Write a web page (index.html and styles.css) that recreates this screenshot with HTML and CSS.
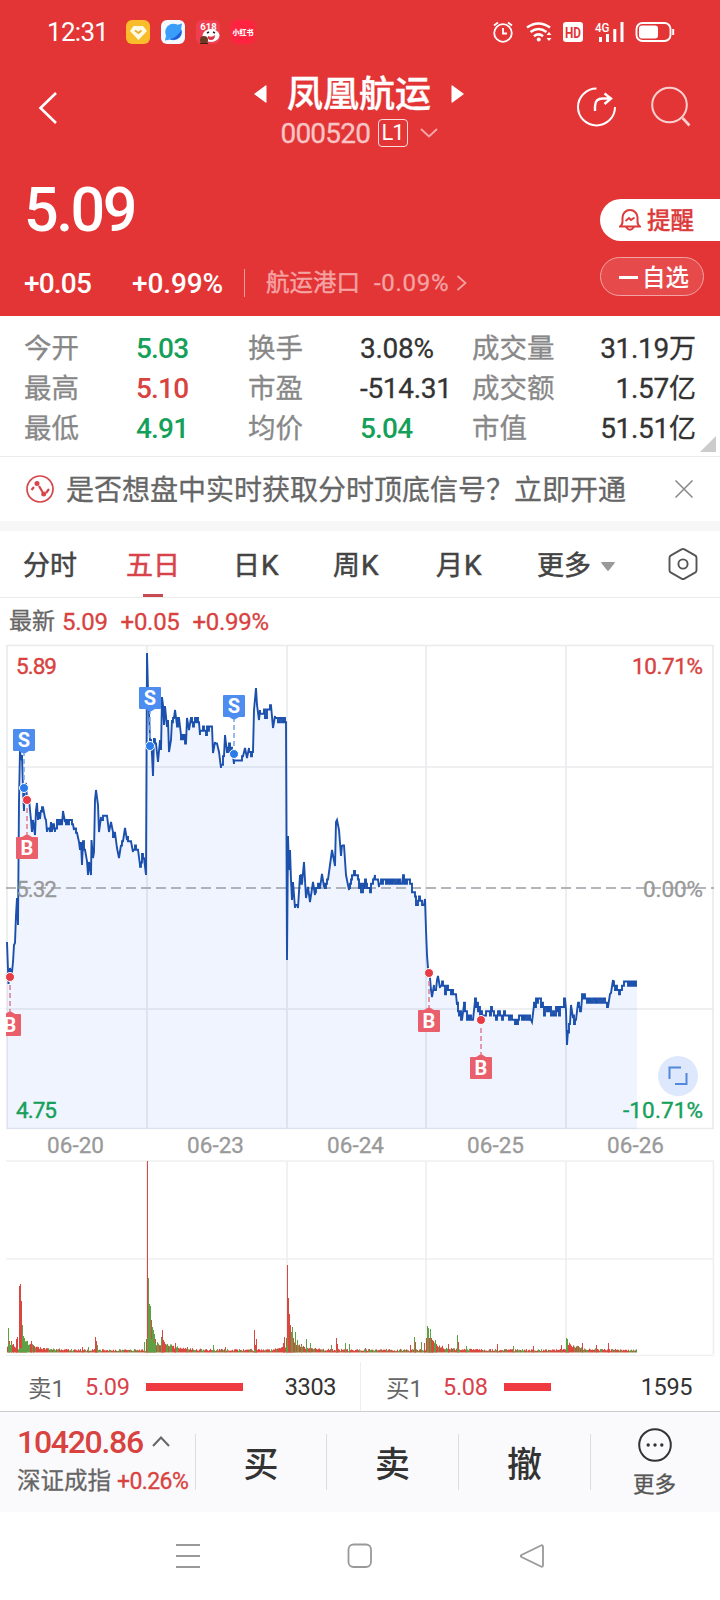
FILE: index.html
```html
<!DOCTYPE html>
<html lang="zh-CN">
<head>
<meta charset="utf-8">
<title>凤凰航运 000520</title>
<link rel="stylesheet" href="styles.css">
</head>
<body>
<main class="app">
  <header class="hero">
    <div class="status">
      <span class="clock">12:31</span>
      <div class="notif">
        <svg width="24" height="24" viewBox="0 0 24 24"><rect width="24" height="24" rx="6" fill="#f9bd2c"/><path d="M7.500 6h9.500L21 11l-8.500 9L4 11z" fill="#fffbe6"/><path d="M9 10.500l3.500 2.500 3-2.500" fill="none" stroke="#e8b035" stroke-width="2"/></svg>
        <svg width="24" height="24" viewBox="0 0 24 24"><rect width="24" height="24" rx="6" fill="#f4f8ff"/><circle cx="12.500" cy="12" r="8.300" fill="#3a9dfa"/><path d="M20.500 10c1.500 8-6 11-12 9.500C14 18 18 14 20.500 10z" fill="#1f5fdc"/><path d="M21 3.500l-5 1.500 4 4zM4 20.500l1-5 4 4z" fill="#3a9dfa"/></svg>
        <svg width="24" height="24" viewBox="0 0 24 24"><rect width="24" height="24" rx="6" fill="#ee3e50"/><ellipse cx="15" cy="15.500" rx="8.500" ry="6.500" fill="#fff"/><path d="M12 16q4 2 7-1 0 5-4 5t-3-4z" fill="#d7394a"/><path d="M11 13l2-1M17 12l2 1" stroke="#222" stroke-width="1.500"/><circle cx="8" cy="20" r="4" fill="#6b3a22"/><path d="M4 23.500h8" stroke="#3c1f14"/><text x="12.500" y="10" text-anchor="middle" class="t618">618</text></svg>
        <svg width="24" height="24" viewBox="0 0 24 24"><rect width="24" height="24" rx="6" fill="#fe2440"/><text x="12" y="15" text-anchor="middle" class="txhs">小红书</text></svg>
      </div>
      <svg class="sys" width="184" height="24" viewBox="0 0 184 24" fill="none" stroke="#fff" stroke-width="1.800">
        <circle cx="11" cy="13" r="8.800"/><path d="M11 8v5.500h4M2 5.500l4-3M20 5.500l-4-3"/>
        <g stroke-width="2.600"><path d="M35 7.500q11.500-8 23 0M38.500 12q8-6 16 0M42 16.200q4.500-3.500 9 0"/></g><circle cx="46.700" cy="19.500" r="2" fill="#fff" stroke="none"/><path d="M54.500 15l2.500-3 2.500 3zM54.500 18l2.500 3 2.500-3z" fill="#fff" stroke="none"/>
        <rect x="71" y="2" width="20" height="20" rx="3" fill="#fff" stroke="none"/><text x="81" y="17.500" text-anchor="middle" class="thd" textLength="16" lengthAdjust="spacingAndGlyphs">HD</text>
        <text x="103" y="11.500" class="t4g" textLength="14.500" lengthAdjust="spacingAndGlyphs">4G</text>
        <path d="M108.500 17v5M115.500 14v8M122.800 9v13M130 2v20" stroke-width="3"/>
        <rect x="144.500" y="3" width="34" height="18" rx="6" stroke-width="1.900"/><rect x="147" y="5.500" width="19" height="13" rx="3" fill="#fff" stroke="none"/><path d="M181.200 9v6" stroke-width="2"/>
      </svg>
    </div>

    <div class="titlebar">
      <svg class="back" width="20" height="34" viewBox="0 0 20 34"><path d="M18 2L2.500 17 18 32" fill="none" stroke="#fff" stroke-width="2.600"/></svg>
      <div class="names">
        <div class="name">
          <svg width="13" height="18" viewBox="0 0 13 18"><path d="M12.500 1v16q0 1-1 .5L0 9 11.500.5q1-.5 1 .5z" fill="#fff"/></svg>
          <h1>凤凰航运</h1>
          <svg width="13" height="18" viewBox="0 0 13 18"><path d="M.5 1v16q0 1 1 .5L13 9 1.500.5Q.5 0 .5 1z" fill="#fff"/></svg>
        </div>
        <div class="code">
          <span>000520</span><b>L1</b>
          <svg width="18" height="10" viewBox="0 0 18 10"><path d="M1 1l8 7.500L17 1" fill="none" stroke="#f3a9a9" stroke-width="1.800"/></svg>
        </div>
      </div>
      <div class="tools">
        <svg width="42" height="42" viewBox="0 0 42 42" fill="none" stroke="#fff" stroke-width="2"><path d="M21.500 2.500a18.500 18.500 0 1 0 18.500 18.500" /><path d="M20 25v-4.500q0-8 8-8H36M29.500 7.500l6.500 5-6.500 5.500" stroke-width="2.400"/></svg>
        <svg width="42" height="42" viewBox="0 0 42 42" fill="none" stroke="#f9d0d0" stroke-width="2"><circle cx="19.500" cy="19" r="17.300"/><path d="M32.500 32l7 7.500" stroke-width="2.600"/></svg>
      </div>
    </div>

    <div class="quote">
      <div class="figures">
        <div class="price">5.09</div>
        <div class="change">
          <span class="chg">+0.05</span><span class="pct">+0.99%</span>
          <i></i>
          <span class="sector">航运港口</span><span class="secpct">-0.09%</span>
          <svg width="11" height="16" viewBox="0 0 11 16"><path d="M1.500 1l8 7-8 7" fill="none" stroke="#f5a3a3" stroke-width="1.700"/></svg>
        </div>
      </div>
      <div class="pills">
        <div class="alert">
          <svg width="22" height="24" viewBox="0 0 22 24" fill="none" stroke="#dc3b3c" stroke-width="2"><path d="M1 18.500q2.500-1.500 2.500-5V9.500a7.500 7.500 0 0 1 15 0v4q0 3.500 2.500 5zM7 19q4 5.500 8 0"/><path d="M6.500 13l3.500-3 2 2 3.500-2.500" stroke-width="1.800"/></svg>
          提醒
        </div>
        <div class="fav"><i></i>自选</div>
      </div>
    </div>
  </header>

  <section class="stats">
    <span>今开</span><b class="up-g">5.03</b><span>换手</span><b>3.08%</b><span>成交量</span><b class="end">31.19<em>万</em></b>
    <span>最高</span><b class="up-r">5.10</b><span>市盈</span><b>-514.31</b><span>成交额</span><b class="end">1.57<em>亿</em></b>
    <span>最低</span><b class="up-g">4.91</b><span>均价</span><b class="up-g">5.04</b><span>市值</span><b class="end">51.51<em>亿</em></b>
    <svg class="corner" width="16" height="16" viewBox="0 0 16 16"><path d="M16 0v16H0z" fill="#ccc"/></svg>
  </section>

  <section class="tip">
    <svg width="28" height="28" viewBox="0 0 28 28" fill="none" stroke="#d5454a" stroke-width="1.700"><circle cx="14" cy="14" r="13"/><path d="M5.500 15l2.500-3M13 11l3.500 6M20 18l3-4" stroke-width="2.200"/><circle cx="11" cy="8.500" r="2.500" fill="#d5454a" stroke="none"/><circle cx="17.700" cy="19" r="2.500" fill="#d5454a" stroke="none"/></svg>
    <p>是否想盘中实时获取分时顶底信号？立即开通</p>
    <svg class="close" width="18" height="18" viewBox="0 0 18 18"><path d="M.5.5l17 17M17.500.5l-17 17" stroke="#888" stroke-width="1.500"/></svg>
  </section>

  <nav class="tabs">
    <span>分时</span><span class="on">五日</span><span>日<u>K</u></span><span>周<u>K</u></span><span>月<u>K</u></span>
    <span class="more">更多<svg width="14" height="9" viewBox="0 0 14 9"><path d="M1 0h12q1.500 0 .5 1.300L8 8.300q-1 1-2 0L.500 1.300Q-.5 0 1 0z" fill="#999"/></svg></span>
    <svg class="gear" width="30" height="34" viewBox="0 0 30 34" fill="none" stroke="#555" stroke-width="1.900"><path d="M13.500 2.400q1.500-.8 3 0l10.500 5.900q1.500.8 1.500 2.500v12.400q0 1.700-1.500 2.500l-10.500 5.900q-1.500.8-3 0L3 25.700q-1.500-.8-1.500-2.500V10.800Q1.500 9.100 3 8.300z"/><circle cx="15" cy="17" r="4.600"/></svg>
  </nav>

  <div class="latest"><span>最新</span><b>5.09</b><b>+0.05</b><b>+0.99%</b></div>

  <svg class="chart" width="720" height="712" viewBox="0 644 720 712">
    <g class="grid">
      <path d="M7 645v484M713 645v484M147 645v484M287 645v484M426 645v484M566 645v484M6 767h708M6 1009h708"/>
      <path d="M6 645.500h708M6 1128.500h708" stroke-width="2.500"/>
    </g>
    <path id="area" class="area"/>
    <path d="M6 888h708" class="mid"/>
    <path id="line" class="line"/>
    <g class="axis">
      <text x="16" y="674" class="r" textLength="41">5.89</text>
      <text x="632" y="674" class="r" textLength="71">10.71%</text>
      <text x="16" y="897" class="n" textLength="41">5.32</text>
      <text x="643" y="897" class="n" textLength="60">0.00%</text>
      <text x="16" y="1118" class="g" textLength="41">4.75</text>
      <text x="623" y="1118" class="g" textLength="80">-10.71%</text>
    </g>
    <g id="marks"></g>
    <circle cx="678" cy="1076" r="20" fill="#dee8fd"/>
    <path d="M669.500 1079v-11.500h11.500M686.500 1073v11h-11.500" fill="none" stroke="#5288dc" stroke-width="2"/>
    <g class="dates">
      <text x="47" y="1153" textLength="57">06-20</text><text x="187" y="1153" textLength="57">06-23</text><text x="327" y="1153" textLength="57">06-24</text><text x="467" y="1153" textLength="57">06-25</text><text x="607" y="1153" textLength="57">06-26</text>
    </g>
    <path class="grid vol" d="M6 1161h708M6 1259h708M6 1355.500h708M713.500 1161v193M147 1161v193M287 1161v193M426 1161v193M566 1161v193"/>
    <path id="volr" stroke="#d8483f"/>
    <path id="volg" stroke="#5fa044"/>
  </svg>

  <section class="book">
    <div><span>卖1</span><b>5.09</b><i style="width:97px"></i><strong>3303</strong></div>
    <div><span>买1</span><b>5.08</b><i style="width:47px"></i><strong>1595</strong></div>
  </section>

  <footer class="actions">
    <div class="index">
      <div class="idx">10420.86<svg width="18" height="11" viewBox="0 0 18 11"><path d="M1 10l8-8.500L17 10" fill="none" stroke="#666" stroke-width="2"/></svg></div>
      <div class="idn">深证成指<b>+0.26%</b></div>
    </div>
    <div class="act">买</div><div class="act">卖</div><div class="act">撤</div>
    <div class="dots">
      <svg width="36" height="36" viewBox="0 0 36 36"><circle cx="18" cy="18" r="15.800" fill="none" stroke="#333" stroke-width="2"/><g fill="#333"><circle cx="11.200" cy="18" r="1.700"/><circle cx="18" cy="18" r="1.700"/><circle cx="24.800" cy="18" r="1.700"/></g></svg>
      更多
    </div>
  </footer>

  <div class="sysnav">
    <svg width="26" height="26" viewBox="0 0 26 26"><path d="M1 2h24M1 13h24M1 24h24" stroke="#999" stroke-width="2"/></svg>
    <svg width="26" height="26" viewBox="0 0 26 26"><rect x="1.500" y="1.500" width="22.500" height="22.500" rx="5" fill="none" stroke="#999" stroke-width="1.800"/></svg>
    <svg width="26" height="26" viewBox="0 0 26 26"><path d="M22 2.500q2-1 2 1.500v18q0 2.500-2 1.500L2.500 14q-1.500-1 0-2z" fill="none" stroke="#999" stroke-width="1.800"/></svg>
  </div>
</main>
<script src="chart.js"></script>
</body>
</html>
```
FILE: styles.css
```css
* { box-sizing: border-box; margin: 0; padding: 0; }
body { width: 720px; background: #fff; font-family: Roboto, "Noto Sans CJK SC", sans-serif; color: #333; }
svg { display: block; flex: none; }
b, em, i, u, strong, h1 { font-weight: 400; font-style: normal; text-decoration: none; }
.app { width: 720px; height: 1600px; display: flex; flex-direction: column; overflow: hidden; }
.app > * { flex: none; }

.hero { height: 316px; background: #e33536; color: #fff; }
.status { height: 64px; display: flex; align-items: center; padding-left: 47px; }
.clock { width: 79px; font-size: 26px; letter-spacing: -.7px; }
.notif { display: flex; gap: 11px; width: 366px; }
.t618 { font: 700 9.500px Roboto, sans-serif; fill: #fff; }
.txhs { font: 900 7px "Noto Sans CJK SC", sans-serif; fill: #fff; }
.thd { font: 700 15px Roboto, sans-serif; fill: #e33536; stroke: none; }
.t4g { font: 500 12px Roboto, sans-serif; fill: #fff; stroke: none; }

.titlebar { height: 96px; display: flex; padding-left: 38px; }
.back { margin-top: 27px; }
.names { width: 602px; display: flex; flex-direction: column; align-items: center; padding-top: 7px; }
.name { display: flex; align-items: center; gap: 20px; height: 40px; margin-bottom: 2px; }
.name svg { margin-top: 5px; }
.name h1 { font: 500 36px/40px "Noto Sans CJK SC", sans-serif; -webkit-text-stroke: .4px; }
.code { display: flex; align-items: center; height: 40px; font-size: 28px; color: #f8c4c4; }
.code span { letter-spacing: -.8px; width: 97px; -webkit-text-stroke: .3px; }
.code b { width: 30px; height: 28px; border: 1.500px solid #fbdcdc; border-radius: 4px; color: #fff; font-size: 22px; line-height: 26px; text-align: center; letter-spacing: -1px; margin-right: 12px; }
.tools { display: flex; gap: 33px; margin: 22px 0 0 -85px; }

.quote { display: flex; justify-content: space-between; height: 156px; }
.figures { padding-left: 24px; }
.price { height: 98px; line-height: 101px; font-size: 61px; font-weight: 500; letter-spacing: -2.500px; }
.change { height: 50px; display: flex; align-items: center; font-size: 28px; font-weight: 500; }
.chg { width: 108px; letter-spacing: -.8px; }
.pct { width: 112px; letter-spacing: -.1px; }
.change i { width: 1px; height: 28px; background: #f09a9a; margin-right: 21px; }
.sector { width: 108px; font-size: 23.500px; font-weight: 400; color: #f5a3a3; line-height: 30px; -webkit-text-stroke: .4px; }
.secpct { width: 82px; font-size: 24px; font-weight: 400; color: #f5a3a3; letter-spacing: .7px; -webkit-text-stroke: .3px; }
.pills { width: 120px; padding-top: 39px; }
.alert { height: 42px; background: #fff; border-radius: 21px 0 0 21px; color: #dc3b3c; font-size: 23.500px; font-weight: 500; display: flex; align-items: center; gap: 6px; padding-left: 19px; line-height: 42px; padding-top: 2px; -webkit-text-stroke: .3px; }
.alert svg { margin-top: -2px; }
.fav { width: 104px; height: 39px; margin-top: 16px; border: 1px solid #f3a3a3; border-radius: 20px; background: #e74a4b; display: flex; align-items: center; padding: 2px 0 0 18px; font-size: 23.500px; font-weight: 500; line-height: 36px; }
.fav i { width: 19px; height: 2.500px; background: #fff; margin-right: 4px; }

.stats { height: 141px; border-bottom: 1px solid #ebebeb; padding: 12px 24px 0 24px; display: grid; grid-template-columns: 112px 112px 112px 112px 112px 1fr; grid-auto-rows: 40px; font-size: 27.500px; line-height: 41px; position: relative; white-space: nowrap; -webkit-text-stroke: .3px; }
.stats span { color: #888; }
.stats b { font-size: 28px; letter-spacing: -.3px; }
.stats .end { text-align: right; }
.stats em { font-size: 27px; letter-spacing: 0; }
.stats .up-g, .stats .up-r { font-weight: 500; letter-spacing: -.8px; -webkit-text-stroke: 0; }
.stats .up-g { color: #15a05a; }
.stats .up-r { color: #d8423f; }
.corner { position: absolute; right: 4px; bottom: 4px; }

.tip { height: 64px; display: flex; align-items: center; padding-left: 26px; }
.tip p { font-size: 28px; line-height: 60px; padding-top: 4px; color: #666; margin-left: 12px; width: 609px; white-space: nowrap; -webkit-text-stroke: .3px; }

.tabs { height: 77px; border-top: 10px solid #f7f7f7; border-bottom: 1px solid #ebebeb; display: grid; grid-template-columns: 102px 108px 100px 103px 101px 129px 30px; align-items: center; padding-left: 23px; font-size: 27px; line-height: 62px; color: #444; font-weight: 400; -webkit-text-stroke: .5px; }
.tabs span { padding-top: 4px; }
.tabs u { font-size: 28px; margin-left: 1px; }
.tabs .on { color: #d8434b; width: 54px; margin-left: 1px; background: linear-gradient(#c84a50, #c84a50) 50% 100% / 20px 3px no-repeat; }
.tabs .more { display: flex; align-items: center; gap: 10px; }
.gear { -webkit-text-stroke: 0; margin-left: 2px; }
.latest { height: 46px; padding: 2px 0 0 9px; display: flex; align-items: center; font-size: 23px; color: #666; line-height: 46px; -webkit-text-stroke: .3px; }
.latest span { width: 53px; }
.latest b { font-size: 24px; color: #d8423f; letter-spacing: -.3px; margin-right: 13px; }

.grid path, path.grid { fill: none; stroke: #e9ebee; stroke-width: 1.700; }
path.vol { stroke: #efefef; }
.area { fill: #4a80f0; fill-opacity: .09; }
.mid { stroke: #999da3; stroke-width: 1.600; stroke-dasharray: 10 5; }
.line { fill: none; stroke: #1b50ad; stroke-width: 1.900; }
.axis text { font-size: 22.500px; }
.axis .r { fill: #d8423f; stroke: #d8423f; stroke-width: .4; }
.axis .g { fill: #15a05a; stroke: #15a05a; stroke-width: .4; }
.axis .n { fill: #999; stroke: #999; stroke-width: .3; }
.dates text { font-size: 22.500px; fill: #999; stroke: #999; stroke-width: .3; }
.flag { font: 700 20px Roboto, sans-serif; fill: #fff; text-anchor: middle; }

.book { height: 56px; border-bottom: 1px solid #ccc; display: flex; padding-top: 6px; }
.book div { width: 360px; height: 49px; display: flex; align-items: center; padding: 0 24px 0 28px; font-size: 23.500px; color: #666; }
.book div + div { border-left: 1px solid #eee; padding: 0 28px 0 25px; }
.book span { width: 57px; }
.book b { width: 61px; color: #d8434b; letter-spacing: -.3px; }
.book i { height: 8px; background: #ef3a42; }
.book strong { margin-left: auto; color: #333; letter-spacing: -.4px; }

.actions { height: 100px; background: #fafafc; display: grid; grid-template-columns: 195px 131px 132px 132px 130px; align-items: center; }
.index { padding-left: 17px; white-space: nowrap; }
.idx { display: flex; align-items: center; gap: 9px; font-size: 32px; line-height: 34px; font-weight: 500; letter-spacing: -1.300px; color: #d8423f; }
.idn { font-size: 23.500px; line-height: 36px; padding-top: 4px; color: #666; -webkit-text-stroke: .3px; }
.idn b { margin-left: 6px; font-size: 23px; color: #d8423f; letter-spacing: -.6px; }
.act, .dots { border-left: 1px solid #ddd; height: 56px; }
.act { text-align: center; font-size: 35px; line-height: 56px; padding-top: 4px; font-weight: 500; }
.dots { display: flex; flex-direction: column; align-items: center; justify-content: center; font-size: 21.500px; line-height: 30px; color: #555; gap: 7px; padding: 3px 2px 0 0; -webkit-text-stroke: .3px; }
.sysnav { height: 88px; display: flex; justify-content: center; align-items: center; gap: 146px; }
```
FILE: chart.js
```js
// Price polyline vertices, "x y" pairs in chart coordinates.
const price = `7 942 8 970 8.500 984 10 968 11 973 12 972 13 962 14 945 15 943 16 915 17 898 18 925 19 802 20 750 21 760 22 755 23 790 24 811 24.500 790 26 783 27 800 29 802 30 810 31 820 32 832 33 820 35 835 36 810 37 803 38 820 39 812 40 819 41 810 43 808 45 818 46 820 47 832 49 825 50 832 51 822 52 832 54 824 55 832 57 824 59 820 62 823 63 811 65 822 68 822 70 820 73 821 74 830 77 832 79 842 80 850 81 842 82 865 83 842 85 850 87 861 88 875 89 862 91 875 91.500 840 93 858 94 852 95 800 96 790 98 805 99 832 101 817 103 820 105 812 107 818 109 832 111 822 113 832 115 835 117 848 119 858 121 845 123 840 125 828 127 840 131 840 133 852 136 845 138 852 140 865 142 858 144 858 146 875 147 653 148 690 149 712 150 740 151 740 152 755 153 776 154 738 156 745 158 762 160 740 161 750 162 697 163 705 164 725 165 706 167 727 168 720 169 752 171 740 172 720 174 720 175 710 177 725 179 720 181 735 184 735 186 742 187 718 189 730 191 718 194 725 197 718 199 722 200 735 203 726 206 735 208 728 212 730 213 753 215 742 217 742 219 752 221 768 224 755 225 735 227 752 229 745 231 750 233 755 234 764 236 757 238 760 241 758 243 760 245 748 247 758 249 748 251 756 253 756 254 710 256 688 257 705 259 720 260 710 262 718 264 712 266 718 268 709 271 709 273 728 275 716 277 722 280 718 283 720 286 718 287 960 288 836 289 870 290 850 291 880 292 900 293 882 295 908 297 900 298 908 300 875 302 882 304 862 306 898 308 887 310 902 313 882 315 895 318 884 320 885 322 874 324 887 328 880 330 865 332 850 335 866 336 822 337 820 339 830 341 856 342 845 344 845 346 875 349 890 352 880 355 872 358 880 362 892 365 883 370 890 374 882 375 875 378 877 379 887 382 880 392 882 402 880 403 876 405 882 409 880 413 890 415 898 417 903 419 896 422 902 424 908 425 899 426 930 427 955 428 968 429 973 430 978 431 990 432 997 434 985 436 993 437 980 438 976 440 988 443 983 446 992 448 988 450 994 454 993 456 998 457 1005 459 1012 462 1018 464 1005 467 1016 470 1018 473 1017 475 1001 478 1007 480 1012 484 1012 488 1014 492 1010 496 1018 500 1010 502 1016 507 1014 511 1018 514 1015 516 1022 518 1019 531 1019 532 1022 534 1005 537 1001 541 1001 544 1012 548 1009 553 1013 558 1010 560 1012 563 1004 565 1001 566 1010 567 1045 568 1030 570 1025 571 1005 573 1018 576 1022 578 1003 581 1010 582 998 590 999 598 1000 605 999 608 1004 610 994 611 993 613 980 616 987 619 992 622 986 626 985 637 985`.split(/\s+/).map(Number);

// Seeded generator: the same tick jitter on every load.
let seed = 7;
const rnd = () => (seed = (seed * 16807) % 2147483647) / 2147483647;

// One price tick (0.01) is 4.25 units high; quiet stretches move by whole ticks.
const TICK = 4.25;
const snap = y => 888 + Math.round((y - 888) / TICK) * TICK;
let d = `M${price[0]} ${price[1]}`;
let side = 1;
for (let i = 2; i < price.length; i += 2) {
  const [x0, y0, x1, y1] = price.slice(i - 2, i + 2);
  if (x1 - x0 >= 2 && Math.abs(y1 - y0) < 5 * (x1 - x0)) {
    for (let x = x0; x < x1; x++) {
      const y = y0 + (y1 - y0) * (x - x0 + .5) / (x1 - x0);
      if (rnd() < .72) side = -side;
      d += `V${snap(y + side * TICK / 2)}H${x + 1}`;
    }
  } else {
    d += `L${x1} ${y1}`;
  }
}
document.getElementById('line').setAttribute('d', d);
document.getElementById('area').setAttribute('d', d + 'V1129H7Z');

// Buy and sell flags: x, dot y, flag centre y, side.
const marks = [[10, 977, 1025, 'B'], [24, 788, 740, 'S'], [27, 800, 848, 'B'], [150, 746, 698, 'S'], [234, 754, 706, 'S'], [429, 973, 1021, 'B'], [481, 1020, 1068, 'B']];
document.getElementById('marks').innerHTML =
  '<clipPath id="frame"><rect x="6" y="644" width="708" height="486"/></clipPath>' +
  marks.map(([x, y, c, t]) => {
    const buy = t === 'B';
    const tip = buy ? c - 14 : c + 14, base = buy ? c - 11 : c + 11;
    return `<g clip-path="url(#frame)"><path d="M${x} ${y}V${tip}" stroke="${buy ? '#dc8495' : '#7eabec'}" stroke-width="1.600" stroke-dasharray="5 3"/>` +
      `<rect x="${x - 11}" y="${c - 11}" width="22" height="22" rx="1" fill="${buy ? '#e9606c' : '#4e8df0'}"/>` +
      `<path d="M${x - 5} ${base}L${x} ${tip}L${x + 5} ${base}z" fill="${buy ? '#e9606c' : '#4e8df0'}"/>` +
      `<text class="flag" x="${x}" y="${c + 7}">${t}</text></g>` +
      `<circle cx="${x}" cy="${y}" r="4.500" fill="${buy ? '#e63c46' : '#2b7bea'}" stroke="#fff" stroke-width="1"/>`;
  }).join('');

// Volume spikes: x, top y, colour.
const spikes = `8 1328 g 9 1341 r 11 1341 r 13 1344 r 16 1339 r 17 1337 r 19 1286 r 20 1284 r 21 1301 r 22 1325 g 23 1336 g 24 1338 g 25 1343 r 26 1342 g 31 1341 r 33 1345 r 95 1337 r 96 1341 r 97 1345 g 82 1347 r 88 1347 g 144 1342 g 146 1339 r 147 1161 r 148 1278 g 149 1304 g 150 1306 g 151 1320 r 152 1327 g 153 1330 g 154 1334 g 155 1339 r 161 1337 r 162 1330 r 163 1340 r 175 1343 r 187 1347 r 213 1345 g 225 1347 r 254 1330 r 255 1345 r 256 1339 r 283 1343 r 284 1337 r 286 1338 r 287 1265 r 288 1298 r 289 1314 r 290 1325 r 291 1332 g 292 1327 g 293 1338 r 295 1332 g 297 1340 g 301 1344 r 306 1339 g 310 1343 g 331 1345 g 336 1338 r 337 1344 r 345 1343 g 349 1344 g 365 1348 r 410 1345 r 414 1337 g 415 1342 r 421 1342 g 424 1343 r 427 1326 g 428 1328 g 429 1338 r 430 1329 g 431 1338 r 432 1340 r 433 1341 r 435 1340 g 436 1344 r 448 1344 r 457 1335 g 458 1342 r 466 1346 g 497 1344 r 513 1346 g 533 1346 r 561 1345 r 566 1338 g 567 1339 g 568 1345 r 582 1343 r 596 1345 r 608 1343 r`.split(/\s+/);
const starts = [[7, 7], [22, 9], [147, 14], [161, 6], [287, 13], [426, 12], [566, 7]];
const vol = { r: '', g: '' };
for (let x = 7; x < 637; x++) {
  let h = 1.4 + rnd() * 2.2;
  for (const [s, a] of starts) if (x >= s) h += a * Math.exp(-(x - s) / 12) * (.6 + rnd() * .6);
  if (x > 272 && x < 287) h += (x - 272) / 4;
  vol[rnd() < .67 ? 'r' : 'g'] += `M${x + .5} 1352.5v${-h.toFixed(1)}`;
}
for (let i = 0; i < spikes.length; i += 3) vol[spikes[i + 2]] += `M${+spikes[i] + .5} 1352.5V${spikes[i + 1]}`;
document.getElementById('volr').setAttribute('d', vol.r);
document.getElementById('volg').setAttribute('d', vol.g);
```
